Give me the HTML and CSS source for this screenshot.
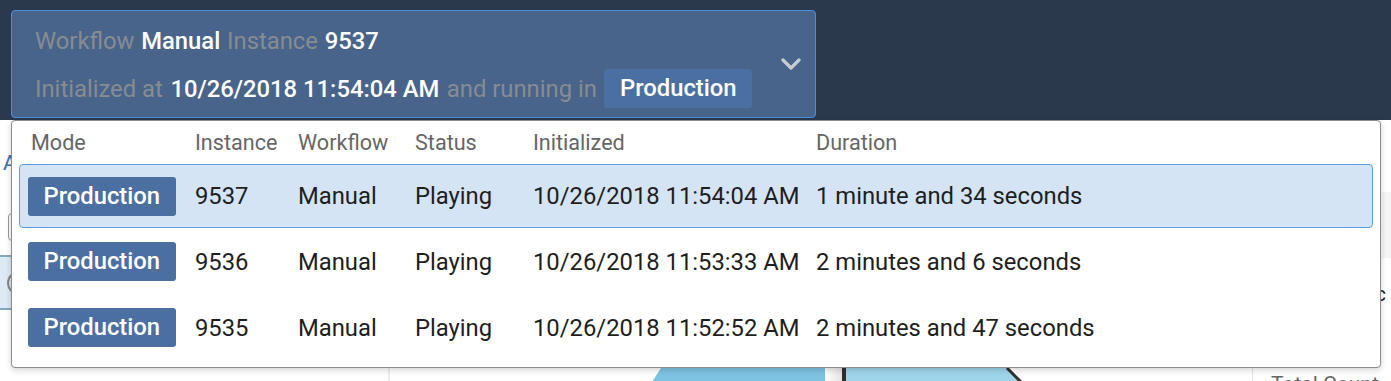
FILE: index.html
```html
<!DOCTYPE html>
<html lang="en">
<head>
<meta charset="utf-8">
<title>Workflow instance</title>
<link rel="stylesheet" href="styles.css">
</head>
<body>
<div class="app">
  <header class="topbar">
    <div class="selector">
      <div class="sel-info">
        <div class="sel-line sel-line1">
          <span class="lbl">Workflow</span><span class="val">Manual</span><span class="lbl">Instance</span><span class="val">9537</span>
        </div>
        <div class="sel-line sel-line2">
          <span class="lbl">Initialized at</span><span class="val">10/26/2018 11:54:04 AM</span><span class="lbl">and running in</span><span class="badge">Production</span>
        </div>
      </div>
      <svg class="chev" width="20" height="13" viewBox="0 0 20 13" aria-hidden="true">
        <polyline points="2,2 10,10 18,2" fill="none" stroke="#c9cdd3" stroke-width="3.2" stroke-linecap="round" stroke-linejoin="round"/>
      </svg>
    </div>
  </header>

  <div class="content">
    <aside class="sidebar">
      <h2 class="side-title">Active Workflows</h2>
      <div class="side-search">Search</div>
      <div class="side-item"><span class="side-icon"></span><span class="side-text">Manual</span></div>
    </aside>
    <main class="main">
      <svg class="chart" width="862" height="40" viewBox="0 0 862 40" aria-hidden="true">
        <defs>
          <linearGradient id="gap" x1="0" x2="1" y1="0" y2="0">
            <stop offset="0" stop-color="#ffffff"/>
            <stop offset="1" stop-color="#e2e2e2"/>
          </linearGradient>
        </defs>
        <polygon points="271,0 435,0 435,40 245,40" fill="#7fc3e3"/>
        <rect x="436" y="0" width="16" height="40" fill="url(#gap)"/>
        <rect x="452" y="0" width="4" height="40" fill="#2f2f2f"/>
        <polygon points="456,0 618,0 658,40 456,40" fill="#9fd5ea"/>
        <line x1="617" y1="0" x2="657" y2="40" stroke="#2f2f2f" stroke-width="3"/>
      </svg>
    </main>
    <aside class="rpanel">
      <div class="r-head">Instance</div>
      <div class="r-row">Summary</div>
      <div class="r-text">Mode: Basic</div>
      <div class="r-total">Total Count</div>
    </aside>
  </div>

  <div class="dropdown">
    <div class="dd-head grid">
      <span class="h-mode">Mode</span><span>Instance</span><span>Workflow</span><span>Status</span><span>Initialized</span><span>Duration</span>
    </div>
    <div class="dd-rows">
      <div class="dd-row grid selected">
        <span><span class="badge">Production</span></span><span>9537</span><span>Manual</span><span>Playing</span><span>10/26/2018 11:54:04 AM</span><span>1 minute and 34 seconds</span>
      </div>
      <div class="dd-row grid">
        <span><span class="badge">Production</span></span><span>9536</span><span>Manual</span><span>Playing</span><span>10/26/2018 11:53:33 AM</span><span>2 minutes and 6 seconds</span>
      </div>
      <div class="dd-row grid">
        <span><span class="badge">Production</span></span><span>9535</span><span>Manual</span><span>Playing</span><span>10/26/2018 11:52:52 AM</span><span>2 minutes and 47 seconds</span>
      </div>
    </div>
  </div>
</div>
</body>
</html>
```

FILE: styles.css
```css
* { box-sizing: border-box; }

html, body {
  margin: 0;
  padding: 0;
}

body {
  width: 1391px;
  height: 381px;
  overflow: hidden;
  background: #ffffff;
  font-family: Roboto, "Liberation Sans", Arial, sans-serif;
  font-size: 23.8px;
  color: #1e1e1e;
}

.app {
  position: relative;
  width: 1391px;
  height: 381px;
}

/* ---------- top bar ---------- */
.topbar {
  height: 120px;
  background: #2b394c;
  padding: 10px 0 0 11px;
}

.selector {
  width: 805px;
  height: 108px;
  border: 1px solid #4d8fdb;
  border-radius: 4px;
  background: #48648a;
  display: flex;
  padding: 0 14px 0 23px;
}

.sel-info {
  flex: 1;
  padding-top: 16.5px;
}

.sel-line {
  display: flex;
  align-items: center;
  white-space: nowrap;
}

.sel-line1 {
  height: 27px;
  line-height: 27px;
  gap: 6.8px;
}

.sel-line2 {
  height: 39px;
  margin-top: 14.5px;
  gap: 7.6px;
}

.lbl {
  color: #878c92;
}

.val {
  color: #ffffff;
  font-weight: 500;
}

.chev {
  align-self: center;
  display: block;
}

.badge {
  display: inline-block;
  height: 39px;
  line-height: 39px;
  padding: 0 15.5px;
  border-radius: 3px;
  background: #4a70a1;
  color: #ffffff;
  font-weight: 500;
  white-space: nowrap;
}

/* ---------- page content behind the dropdown ---------- */
.content {
  display: flex;
  height: 261px;
}

.sidebar {
  width: 390px;
  border-right: 2px solid #ececec;
  padding-top: 30px;
}

.side-title {
  margin: 0;
  padding-left: 3px;
  font-size: 21px;
  font-weight: 400;
  line-height: 26px;
  color: #3a6fb0;
}

.side-search {
  margin: 37px 0 0 8px;
  width: 360px;
  height: 28px;
  border: 1px solid #9a9a9a;
  border-radius: 4px;
  font-size: 16px;
  line-height: 26px;
  padding-left: 10px;
  color: #999;
}

.side-item {
  margin-top: 14px;
  height: 55px;
  background: #dde9f3;
  border-top: 2px solid #86a9c2;
  border-bottom: 2px solid #86a9c2;
  display: flex;
  align-items: center;
  padding-left: 7px;
  gap: 10px;
}

.side-icon {
  width: 24px;
  height: 24px;
  border: 2px solid #8a8a8a;
  border-radius: 50%;
}

.side-text {
  font-size: 20px;
}

.main {
  flex: 1;
  padding-top: 248px;
}

.chart {
  display: block;
}

.rpanel {
  width: 139px;
  border-left: 1px solid #e4e4e4;
  padding-top: 20px;
  overflow: hidden;
  white-space: nowrap;
}

.r-head {
  height: 52px;
  font-size: 20px;
  padding-left: 18px;
}

.r-row {
  height: 66px;
  background: #f5f5f5;
  font-size: 20px;
  padding-left: 18px;
  line-height: 66px;
}

.r-text {
  margin-top: 24px;
  font-size: 21px;
  padding-left: 18px;
}

.r-total {
  margin-top: 66px;
  font-size: 21px;
  padding-left: 18px;
  color: #666;
}

/* ---------- dropdown ---------- */
.dropdown {
  position: absolute;
  top: 120px;
  left: 11px;
  width: 1370px;
  height: 248px;
  background: #ffffff;
  border: 1px solid #8c8c8c;
  border-radius: 4px;
  box-shadow: 0 2px 6px rgba(0, 0, 0, 0.18);
  padding: 0 7px 7px;
}

.grid {
  display: grid;
  grid-template-columns: 167px 103px 117px 118px 283px 1fr;
  align-items: center;
  white-space: nowrap;
}

.dd-head {
  padding: 9px 0 8px 9px;
  font-size: 21.6px;
  line-height: 26px;
  color: #666666;
}

.h-mode {
  padding-left: 3px;
}

.dd-rows {
  display: flex;
  flex-direction: column;
  gap: 1.75px;
}

.dd-row {
  height: 64px;
  border: 1px solid transparent;
  border-radius: 4px;
  padding-left: 8px;
}

.dd-row.selected {
  background: #d4e4f5;
  border-color: #5c9de6;
}

.dd-row .badge {
  width: 148px;
  background: #4a6fa0;
}
```
